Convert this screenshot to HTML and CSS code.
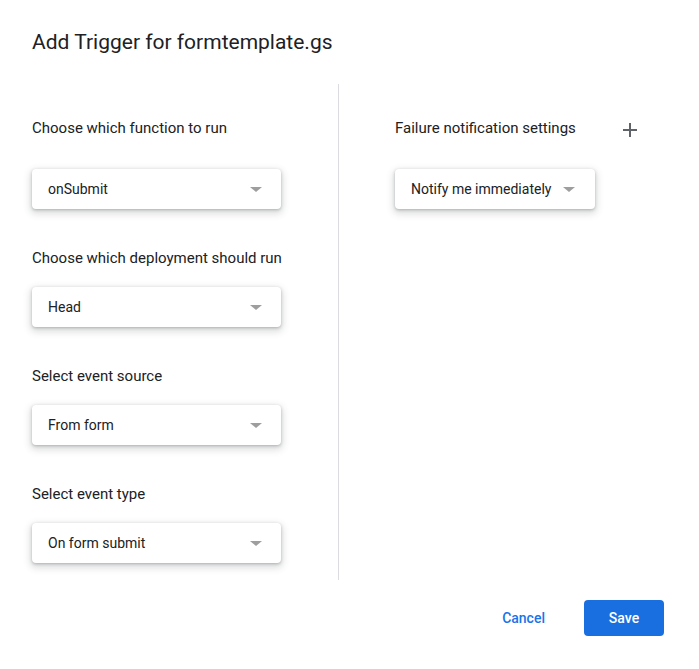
FILE: index.html
```html
<!DOCTYPE html>
<html lang="en">
<head>
<meta charset="utf-8">
<title>Add Trigger</title>
<link rel="stylesheet" href="styles.css">
</head>
<body>
<div class="dialog">
  <h1 class="title">Add Trigger for formtemplate.gs</h1>
  <div class="columns">
    <div class="col-left">
      <div class="label first">Choose which function to run</div>
      <div class="select"><span>onSubmit</span><i class="arrow"></i></div>
      <div class="label">Choose which deployment should run</div>
      <div class="select"><span>Head</span><i class="arrow"></i></div>
      <div class="label">Select event source</div>
      <div class="select"><span>From form</span><i class="arrow"></i></div>
      <div class="label">Select event type</div>
      <div class="select"><span>On form submit</span><i class="arrow"></i></div>
    </div>
    <div class="col-right">
      <div class="right-head">
        <div class="label-inline">Failure notification settings</div>
        <svg class="plus" width="14" height="14" viewBox="0 0 14 14"><path d="M7 0v14M0 7h14" stroke="#5f6368" stroke-width="2" fill="none"/></svg>
      </div>
      <div class="select narrow"><span>Notify me immediately</span><i class="arrow"></i></div>
    </div>
  </div>
  <div class="footer">
    <button class="btn-text">Cancel</button>
    <button class="btn-primary">Save</button>
  </div>
</div>
</body>
</html>
```
FILE: styles.css
```css
html, body {
  margin: 0;
  padding: 0;
  background: #fff;
}
body {
  font-family: Roboto, "Noto Sans", Arial, sans-serif;
  color: #202124;
}
.dialog {
  width: 699px;
  height: 669px;
  box-sizing: border-box;
  padding: 28px 35px 0 32px;
}
.title {
  margin: 0;
  font-size: 21px;
  line-height: 28px;
  font-weight: 400;
  color: #202124;
}
.columns {
  display: flex;
  margin-top: 28px;
  height: 496px;
}
.col-left {
  width: 306px;
  flex: none;
}
.col-right {
  flex: 1;
  border-left: 1px solid #dadce0;
  padding-left: 56px;
}
.label {
  font-size: 15px;
  line-height: 20px;
  color: #202124;
  margin-top: 39px;
  margin-bottom: 19px;
}
.label.first {
  margin-top: 34px;
  margin-bottom: 31px;
}
.select {
  width: 249px;
  height: 40px;
  box-sizing: border-box;
  padding: 0 19px 0 16px;
  background: #fff;
  border-radius: 4px;
  box-shadow: 0 1px 3px 0 rgba(60, 64, 67, 0.3), 0 3px 7px 2px rgba(60, 64, 67, 0.17);
  display: flex;
  align-items: center;
  justify-content: space-between;
  font-size: 14px;
  color: #202124;
}
.select.narrow {
  width: 200px;
  padding-right: 20px;
}
.arrow {
  width: 0;
  height: 0;
  border-left: 6px solid transparent;
  border-right: 6px solid transparent;
  border-top: 5px solid #9e9e9e;
  margin-top: 1px;
}
.right-head {
  display: flex;
  align-items: center;
  justify-content: space-between;
  padding-top: 34px;
  padding-right: 27px;
  height: 20px;
  margin-bottom: 31px;
}
.label-inline {
  font-size: 15px;
  line-height: 20px;
  color: #202124;
}
.plus {
  display: block;
  margin-top: 3px;
}
.footer {
  display: flex;
  justify-content: flex-end;
  align-items: center;
  gap: 23px;
  margin-top: 20px;
}
.btn-text, .btn-primary {
  font-family: Roboto, "Noto Sans", Arial, sans-serif;
  font-size: 14px;
  font-weight: 500;
  height: 36px;
  border: none;
  border-radius: 4px;
  cursor: pointer;
}
.btn-text {
  background: transparent;
  color: #1a73e8;
  padding: 0 16px;
}
.btn-primary {
  background: #1a6fe0;
  color: #fff;
  width: 80px;
  padding: 0;
}
```
